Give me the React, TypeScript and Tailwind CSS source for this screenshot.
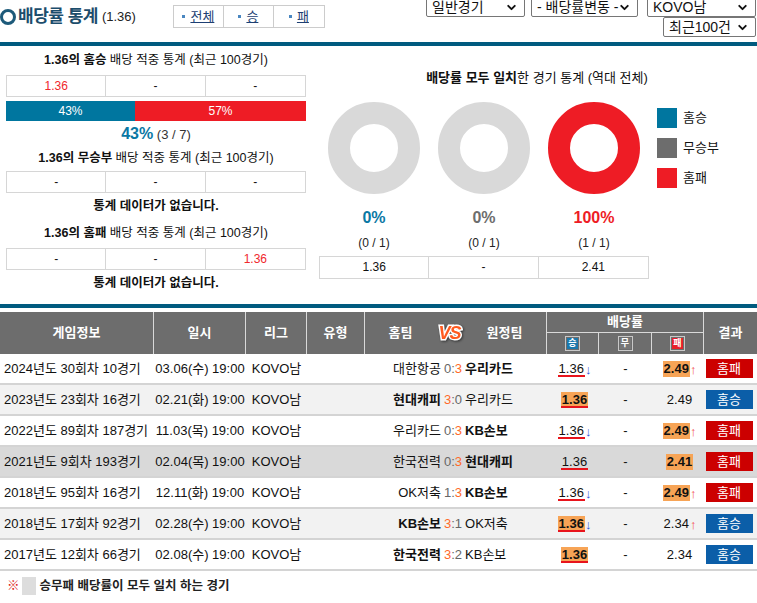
import React from 'react';
import { ChevronDown } from 'lucide-react';

type Row = {
  info: string;
  date: string;
  home: string;
  away: string;
  hs: number;
  as: number;
  winArrow?: boolean;
  winBold?: boolean;
  lose: string;
  loseArrow?: boolean;
  loseBold?: boolean;
  result: '홈승' | '홈패';
  match?: boolean;
};

const rows: Row[] = [
  { info: '2024년도 30회차 10경기', date: '03.06(수) 19:00', home: '대한항공', away: '우리카드', hs: 0, as: 3, winArrow: true, lose: '2.49', loseArrow: true, loseBold: true, result: '홈패' },
  { info: '2023년도 23회차 16경기', date: '02.21(화) 19:00', home: '현대캐피', away: '우리카드', hs: 3, as: 0, winBold: true, lose: '2.49', result: '홈승' },
  { info: '2022년도 89회차 187경기', date: '11.03(목) 19:00', home: '우리카드', away: 'KB손보', hs: 0, as: 3, winArrow: true, lose: '2.49', loseArrow: true, loseBold: true, result: '홈패' },
  { info: '2021년도 9회차 193경기', date: '02.04(목) 19:00', home: '한국전력', away: '현대캐피', hs: 0, as: 3, lose: '2.41', loseBold: true, result: '홈패', match: true },
  { info: '2018년도 95회차 16경기', date: '12.11(화) 19:00', home: 'OK저축', away: 'KB손보', hs: 1, as: 3, winArrow: true, lose: '2.49', loseArrow: true, loseBold: true, result: '홈패' },
  { info: '2018년도 17회차 92경기', date: '02.28(수) 19:00', home: 'KB손보', away: 'OK저축', hs: 3, as: 1, winArrow: true, winBold: true, lose: '2.34', loseArrow: true, result: '홈승' },
  { info: '2017년도 12회차 66경기', date: '02.08(수) 19:00', home: '한국전력', away: 'KB손보', hs: 3, as: 2, winBold: true, lose: '2.34', result: '홈승' },
];

const cols = 'grid grid-cols-[154px_92px_61px_58px_182px_52px_53px_52px_53px]';

const Select = ({ label, w }: { label: string; w: string }) => (
  <div className={`relative ${w} h-[20px] border border-[#767676] rounded-[2px] bg-white text-[14px] leading-[18px] pl-[5px] text-[#111]`}>
    {label}
    <ChevronDown size={13} strokeWidth={3.5} className="absolute right-[6px] top-[3px]" />
  </div>
);

const MiniTable = ({ cells }: { cells: [string, string, string] }) => (
  <div className="grid grid-cols-3 border border-[#d6d6d6] text-[12px] text-[#111]">
    {cells.map((c, i) => (
      <div
        key={i}
        className={`h-[20px] leading-[20px] text-center ${i < 2 ? 'border-r border-[#d6d6d6]' : ''} ${c !== '-' ? 'text-[#f0282d]' : ''}`}
      >
        {c}
      </div>
    ))}
  </div>
);

const StatTitle = ({ kind, className = '' }: { kind: string; className?: string }) => (
  <div className={`text-center text-[12.5px] leading-[16px] text-[#111] ${className}`}>
    <span className="font-bold">1.36의 {kind}</span> 배당 적중 통계 (최근 100경기)
  </div>
);

const Donut = ({ color }: { color: string }) => (
  <svg width="92" height="92" viewBox="0 0 92 92">
    <circle cx="46" cy="46" r="35" fill="none" stroke={color} strokeWidth="22" />
  </svg>
);

const Badge = ({ label, bg }: { label: string; bg: string }) => (
  <span className="inline-flex items-center justify-center w-[15px] h-[15px] border border-[#c8c8c8] p-[1px]">
    <span className={`flex items-center justify-center w-full h-full ${bg} text-white text-[9px] font-bold leading-none`}>{label}</span>
  </span>
);

const Odds = ({ v, bold, arrow, under, up }: { v: string; bold?: boolean; arrow?: boolean; under?: boolean; up?: boolean }) => (
  <span className="inline-flex items-end">
    <span
      className={`inline-block h-[16px] leading-[16px] px-[1px] ${bold ? 'font-bold bg-[#f7a456]' : ''} ${under ? 'border-b-2 border-[#e8141c]' : ''}`}
    >
      {v}
    </span>
    {arrow && (
      <span className={`text-[13px] leading-[15px] ${up ? 'text-[#f24b4b]' : 'text-[#3553d8]'}`}>{up ? '↑' : '↓'}</span>
    )}
  </span>
);

export default function App() {
  return (
    <div className="w-[757px] h-[603px] overflow-hidden bg-white font-['Liberation_Sans','Noto_Sans_CJK_KR',sans-serif] text-[#111]">
      {/* header */}
      <div className="flex justify-between h-[42px]">
        <div className="flex items-start pt-[5px]">
          <div className="flex items-center h-[23px]">
            <span className="w-[16px] h-[16px] rounded-full border-[3px] border-[#1d5a7a]" />
            <span className="ml-[2px] text-[17px] font-bold text-[#1c4d6c] tracking-[-0.5px]">배당률 통계</span>
            <span className="ml-[4px] text-[13px] text-[#222]">(1.36)</span>
          </div>
          <div className="ml-[37px] flex border border-[#cccccc] h-[23px]">
            {['전체', '승', '패'].map((t, i) => (
              <div key={t} className={`w-[50px] flex items-center justify-center text-[13px] ${i < 2 ? 'border-r border-[#cccccc]' : ''}`}>
                <span className="w-[3px] h-[3px] bg-[#4a87c0] mr-[5px]" />
                <span className="underline text-[#1d3f73]">{t}</span>
              </div>
            ))}
          </div>
        </div>
        <div className="w-[331px] flex flex-col items-end">
          <div className="flex -mt-[3px]">
            <Select label="일반경기" w="w-[99px]" />
            <div className="ml-[6px]"><Select label="- 배당률변동 -" w="w-[107px]" /></div>
            <div className="ml-[9px] mr-[1px]"><Select label="KOVO남" w="w-[109px]" /></div>
          </div>
          <div className="mr-[1px]">
            <Select label="최근100건" w="w-[93px]" />
          </div>
        </div>
      </div>
      <div className="h-[4px] bg-[#005b7f]" />

      {/* stats */}
      <div className="flex h-[258px]">
        <div className="w-[300px] ml-[6px]">
          <StatTitle kind="홈승" className="mt-[6px]" />
          <div className="mt-[7px]"><MiniTable cells={['1.36', '-', '-']} /></div>
          <div className="mt-[4px] flex h-[20px] text-[12px] leading-[20px] text-white">
            <div className="w-[129px] bg-[#00769f] text-center">43%</div>
            <div className="flex-1 bg-[#ee1c25] text-center">57%</div>
          </div>
          <div className="mt-[3px] leading-[20px] text-center">
            <span className="text-[16px] font-bold text-[#0a78a4]">43%</span>
            <span className="text-[13px] text-[#333]"> (3 / 7)</span>
          </div>
          <StatTitle kind="무승부" className="mt-[5px]" />
          <div className="mt-[5px]"><MiniTable cells={['-', '-', '-']} /></div>
          <div className="mt-[5px] text-center text-[12.5px] leading-[16px] font-bold">통계 데이터가 없습니다.</div>
          <StatTitle kind="홈패" className="mt-[11px]" />
          <div className="mt-[7px]"><MiniTable cells={['-', '-', '1.36']} /></div>
          <div className="mt-[5px] text-center text-[12.5px] leading-[16px] font-bold">통계 데이터가 없습니다.</div>
        </div>

        <div className="flex-1 pl-[13px]">
          <div className="mt-[24px] text-center text-[13px] leading-[16px] pr-[2px]">
            <span className="font-bold">배당률 모두 일치</span>한 경기 통계 (역대 전체)
          </div>
          <div className="flex mt-[16px]">
            <div className="w-[330px]">
              <div className="grid grid-cols-3 h-[92px] justify-items-center">
                <Donut color="#d9d9d9" />
                <Donut color="#d9d9d9" />
                <Donut color="#ee1c25" />
              </div>
              <div className="grid grid-cols-3 mt-[14px] text-center text-[16px] font-bold leading-[20px]">
                <span className="text-[#0a78a4]">0%</span>
                <span className="text-[#6d6d6d]">0%</span>
                <span className="text-[#ee1c25]">100%</span>
              </div>
              <div className="grid grid-cols-3 mt-[7px] text-center text-[12px] leading-[16px] text-[#222]">
                <span>(0 / 1)</span>
                <span>(0 / 1)</span>
                <span>(1 / 1)</span>
              </div>
              <div className="mt-[5px] grid grid-cols-3 border border-[#d6d6d6] text-[12px] text-center">
                <div className="h-[21px] leading-[21px] border-r border-[#d6d6d6]">1.36</div>
                <div className="h-[21px] leading-[21px] border-r border-[#d6d6d6]">-</div>
                <div className="h-[21px] leading-[21px]">2.41</div>
              </div>
            </div>
            <div className="ml-[8px] mt-[6px] flex flex-col gap-[10px] text-[13px]">
              {[
                ['홈승', 'bg-[#00769f]'],
                ['무승부', 'bg-[#6d6d6d]'],
                ['홈패', 'bg-[#ee1c25]'],
              ].map(([t, c]) => (
                <div key={t} className="flex items-center h-[20px]">
                  <span className={`w-[20px] h-[20px] ${c}`} />
                  <span className="ml-[6px]">{t}</span>
                </div>
              ))}
            </div>
          </div>
        </div>
      </div>
      <div className="h-[4px] bg-[#005b7f]" />

      {/* table */}
      <div className="mt-[4px]">
        <div className={`${cols} grid-rows-[21px_21px] bg-[#6d6d6d] text-white text-[13px] font-bold`}>
          {['게임정보', '일시', '리그', '유형'].map((t) => (
            <div key={t} className="row-span-2 flex items-center justify-center border-r border-[#d9d9d9]">{t}</div>
          ))}
          <div className="row-span-2 flex items-center justify-center border-r border-[#d9d9d9]">
            <span>홈팀</span>
            <span className="mx-[26px] italic font-black text-[18px] text-[#ff5a1f] [-webkit-text-stroke:3px_#ffffff] [paint-order:stroke_fill] tracking-[-1px] drop-shadow-[1px_1px_1px_rgba(0,0,0,0.5)]">VS</span>
            <span>원정팀</span>
          </div>
          <div className="col-span-3 flex items-center justify-center border-r border-b border-[#d9d9d9]">배당률</div>
          <div className="row-span-2 flex items-center justify-center">결과</div>
          <div className="flex items-center justify-center border-r border-[#d9d9d9]"><Badge label="승" bg="bg-[#1a78ad]" /></div>
          <div className="flex items-center justify-center border-r border-[#d9d9d9]"><Badge label="무" bg="bg-[#777777]" /></div>
          <div className="flex items-center justify-center border-r border-[#d9d9d9]"><Badge label="패" bg="bg-[#e8202a]" /></div>
        </div>

        {rows.map((r, i) => {
          const bg = r.match ? 'bg-[#d9d9d9]' : i % 2 === 1 ? 'bg-[#f2f2f2]' : 'bg-white';
          const homeWin = r.hs > r.as;
          return (
            <div key={i} className={`${cols} h-[31px] border-b-2 border-[#d4d4d4] text-[13px] items-center ${bg}`}>
              <div className="pl-[4px] whitespace-nowrap">{r.info}</div>
              <div className="text-center whitespace-nowrap">{r.date}</div>
              <div className="text-center">KOVO남</div>
              <div />
              <div className="grid grid-cols-[1fr_auto_1fr] gap-[3px] whitespace-nowrap pr-[6px]">
                <span className={`text-right ${homeWin ? 'font-bold' : ''}`}>{r.home}</span>
                <span>
                  <span className={homeWin ? 'text-[#ff6a2a]' : 'text-[#666]'}>{r.hs}</span>
                  <span className="text-[#666]">:</span>
                  <span className={!homeWin ? 'text-[#ff6a2a]' : 'text-[#666]'}>{r.as}</span>
                </span>
                <span className={`text-left ${!homeWin ? 'font-bold' : ''}`}>{r.away}</span>
              </div>
              <div className="flex justify-center pl-[3px]">
                <Odds v="1.36" bold={r.winBold} arrow={r.winArrow} under />
              </div>
              <div className="text-center">-</div>
              <div className="flex justify-center pl-[3px]">
                <Odds v={r.lose} bold={r.loseBold} arrow={r.loseArrow} up />
              </div>
              <div className="flex justify-center pr-[3px]">
                <span className={`w-[47px] h-[19px] leading-[19px] text-center text-white text-[13px] ${r.result === '홈패' ? 'bg-[#cc0000]' : 'bg-[#0b5ea8]'}`}>
                  {r.result}
                </span>
              </div>
            </div>
          );
        })}
      </div>

      {/* footer */}
      <div className="flex items-center h-[30px] pl-[7px] text-[12.5px]">
        <span className="text-[#d22] font-bold">※</span>
        <span className="ml-[2px] w-[14px] h-[18px] bg-[#dddddd]" />
        <span className="ml-[4px] font-bold text-[#222]">승무패 배당률이 모두 일치 하는 경기</span>
      </div>
    </div>
  );
}
